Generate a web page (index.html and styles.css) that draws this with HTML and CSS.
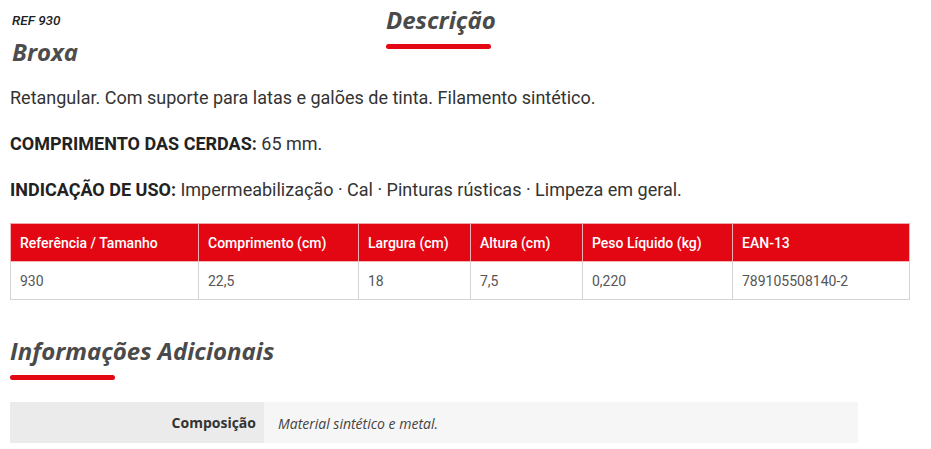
FILE: index.html
```html
<!DOCTYPE html>
<html lang="pt">
<head>
<meta charset="utf-8">
<title>Broxa</title>
<link rel="stylesheet" href="styles.css">
</head>
<body>
<div class="page">
  <div class="top">
    <div class="product">
      <div class="ref">REF 930</div>
      <h1 class="name">Broxa</h1>
    </div>
    <h2 class="section-title">Descrição</h2>
  </div>

  <div class="desc">
    <p>Retangular. Com suporte para latas e galões de tinta. Filamento sintético.</p>
    <p><strong>COMPRIMENTO DAS CERDAS:</strong> 65 mm.</p>
    <p><strong>INDICAÇÃO DE USO:</strong> Impermeabilização · Cal · Pinturas rústicas · Limpeza em geral.</p>
  </div>

  <table class="specs">
    <colgroup>
      <col class="c1"><col class="c2"><col class="c3"><col class="c4"><col class="c5"><col class="c6">
    </colgroup>
    <thead>
      <tr>
        <th>Referência / Tamanho</th>
        <th>Comprimento (cm)</th>
        <th>Largura (cm)</th>
        <th>Altura (cm)</th>
        <th>Peso Líquido (kg)</th>
        <th>EAN-13</th>
      </tr>
    </thead>
    <tbody>
      <tr>
        <td>930</td>
        <td>22,5</td>
        <td>18</td>
        <td>7,5</td>
        <td>0,220</td>
        <td>789105508140-2</td>
      </tr>
    </tbody>
  </table>

  <h2 class="section-title info-title">Informações Adicionais</h2>

  <table class="info">
    <tr>
      <th>Composição</th>
      <td>Material sintético e metal.</td>
    </tr>
  </table>
</div>
</body>
</html>
```

FILE: styles.css
```css
* { box-sizing: border-box; }

body {
  margin: 0;
  background: #fff;
  font-family: Roboto, "Liberation Sans", sans-serif;
  color: #333;
}

.page {
  padding: 0 10px;
}

.top {
  display: grid;
  grid-template-columns: 376px auto;
  align-items: start;
}

.product {
  padding: 12px 0 0 2px;
}

.ref {
  font-family: Roboto, sans-serif;
  font-style: italic;
  font-weight: 500;
  font-size: 13.5px;
  line-height: 16px;
  color: #222;
}

.name {
  margin: 9px 0 0;
  font-family: "Open Sans", sans-serif;
  font-style: italic;
  font-weight: 700;
  font-size: 24px;
  line-height: 30px;
  color: #4d4d4d;
}

.section-title {
  margin: 0;
  padding-top: 3px;
  font-family: "Open Sans", sans-serif;
  font-style: italic;
  font-weight: 700;
  font-size: 24px;
  line-height: 33px;
  color: #4a4a4a;
  display: flex;
  flex-direction: column;
  align-items: flex-start;
}

.section-title::after {
  content: "";
  display: block;
  width: 105px;
  height: 5px;
  margin-top: 8px;
  background: #e30613;
  border-radius: 3px;
}

.desc {
  margin-top: 18px;
}

.desc p {
  margin: 0 0 20px;
  font-size: 18px;
  line-height: 26px;
  color: #333;
}

.desc strong {
  font-weight: 700;
  color: #222;
}

.specs {
  width: 899px;
  border-collapse: collapse;
  table-layout: fixed;
  font-size: 14px;
  margin-top: 4px;
}

.specs .c1 { width: 188px; }
.specs .c2 { width: 160px; }
.specs .c3 { width: 112px; }
.specs .c4 { width: 112px; }
.specs .c5 { width: 150px; }
.specs .c6 { width: 177px; }

.specs th {
  background: #e30613;
  color: #fff;
  font-weight: 500;
  text-align: left;
  height: 38px;
  padding: 0 9px;
  border: 1px solid #f2b3b6;
  border-top-color: #f0a7ab;
}

.specs td {
  color: #555;
  height: 38px;
  padding: 0 9px;
  border: 1px solid #d4d4d4;
}

.info-title {
  margin-top: 31px;
}

.info {
  margin-top: 22px;
  width: 848px;
  border-collapse: collapse;
  font-family: "Open Sans", sans-serif;
  font-size: 14px;
}

.info th {
  width: 254px;
  height: 41px;
  background: #ebebeb;
  text-align: right;
  padding: 0 8px 0 0;
  font-weight: 700;
  color: #333;
}

.info td {
  background: #f6f6f6;
  font-style: italic;
  color: #444;
  padding: 2px 14px 0;
}
```
